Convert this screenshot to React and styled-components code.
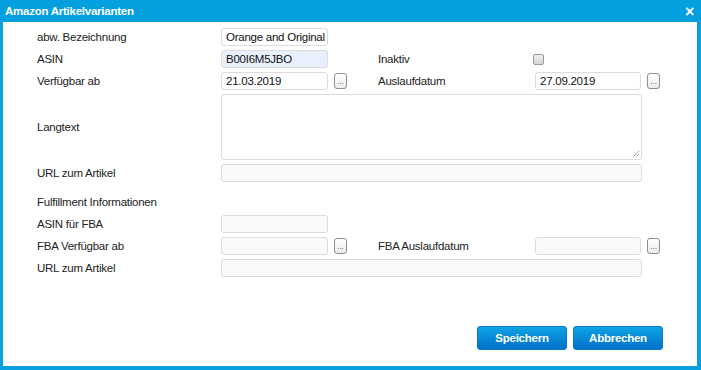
import styled, { createGlobalStyle } from 'styled-components'

const GlobalStyle = createGlobalStyle`
  html, body {
    margin: 0;
    padding: 0;
    background: #fff;
  }
  body {
    font-family: "Liberation Sans", Arial, sans-serif;
    font-size: 11.5px;
    letter-spacing: -0.25px;
  }
`

const Dialog = styled.div`
  width: 701px;
  height: 370px;
  box-sizing: border-box;
  display: flex;
  flex-direction: column;
  background: #fff;
  border-left: 3px solid #0aa0e0;
  border-right: 4px solid #0aa0e0;
  border-bottom: 4px solid #0aa0e0;
`

const TitleBar = styled.div`
  height: 22px;
  margin: 0 -4px 0 -3px;
  padding: 0 7px 0 5px;
  background: #039fdf;
  color: #fff;
  font-weight: bold;
  display: flex;
  align-items: center;
  justify-content: space-between;
`

const Close = styled.span`
  font-size: 16px;
  font-weight: bold;
  line-height: 1;
  margin-top: 2px;
`

const Body = styled.div`
  flex: 1;
  padding: 6px 0 0 34px;
  display: grid;
  grid-template-columns: 184px 157px 157px 125px;
  grid-auto-rows: minmax(18px, auto);
  row-gap: 4px;
  align-content: start;
`

const Label = styled.div`
  color: #222;
  display: flex;
  align-items: center;
  grid-column: ${p => p.$col || 'auto'};
`

const Heading = styled(Label)`
  grid-column: 1 / -1;
  box-sizing: border-box;
  height: 25px;
  padding-top: 7px;
`

const Field = styled.div`
  display: flex;
  align-items: center;
  gap: 6px;
  grid-column: ${p => p.$span ? '2 / 5' : 'auto'};
`

const Input = styled.div`
  box-sizing: border-box;
  height: 18px;
  width: ${p => p.$wide ? '421px' : '107px'};
  border: 1px solid #dcdcdc;
  border-radius: 3px;
  background: ${p => p.$bg || '#fff'};
  color: #111;
  padding: 0 0 0 4px;
  display: flex;
  align-items: center;
  white-space: nowrap;
  overflow: hidden;
`

const TextArea = styled(Input)`
  height: 66px;
  position: relative;
`

const Grip = styled.svg`
  position: absolute;
  right: 1px;
  bottom: 1px;
`

const TextRow = styled(Field)`
  grid-row: span 3;
  align-items: flex-start;
`

const TallLabel = styled(Label)`
  grid-row: span 3;
`

const DotsButton = styled.div`
  box-sizing: border-box;
  width: 13px;
  height: 16px;
  border: 1px solid #8e8e8e;
  border-radius: 3px;
  background: linear-gradient(#fff, #ececec);
  color: #444;
  font-size: 8px;
  letter-spacing: 0;
  line-height: 1;
  display: flex;
  align-items: flex-end;
  justify-content: center;
  padding-bottom: 2px;
`

const Check = styled.div`
  box-sizing: border-box;
  width: 11px;
  height: 11px;
  margin-left: -2px;
  border: 1px solid #9a9a9a;
  border-radius: 2px;
  background: linear-gradient(#f2f2f2, #d4d4d4);
`

const Footer = styled.div`
  display: flex;
  justify-content: flex-end;
  gap: 6px;
  padding: 0 34px 16px 0;
`

const Button = styled.div`
  box-sizing: border-box;
  width: 90px;
  height: 24px;
  border: 1px solid #0b78c8;
  border-radius: 3px;
  background: linear-gradient(#0ea3e3, #0170c9);
  color: #fff;
  font-weight: bold;
  display: flex;
  align-items: center;
  justify-content: center;
`

function DateField({ value }) {
  return (
    <Field>
      <Input $bg={value ? '#fff' : '#fafafa'}>{value}</Input>
      <DotsButton>...</DotsButton>
    </Field>
  )
}

export default function App() {
  return (
    <>
      <GlobalStyle />
      <Dialog>
        <TitleBar>
          <span>Amazon Artikelvarianten</span>
          <Close>×</Close>
        </TitleBar>
        <Body>
          <Label>abw. Bezeichnung</Label>
          <Field><Input>Orange and Original</Input></Field>
          <Label $col="3 / 5" />

          <Label>ASIN</Label>
          <Field><Input $bg="#e8f0fe">B00I6M5JBO</Input></Field>
          <Label>Inaktiv</Label>
          <Field><Check /></Field>

          <Label>Verfügbar ab</Label>
          <DateField value="21.03.2019" />
          <Label>Auslaufdatum</Label>
          <DateField value="27.09.2019" />

          <TallLabel>Langtext</TallLabel>
          <TextRow $span>
            <TextArea $wide>
              <Grip width="9" height="9" viewBox="0 0 9 9">
                <path d="M8 2 L2 8 M8 5 L5 8" stroke="#666" strokeWidth="1" strokeDasharray="1 1" />
              </Grip>
            </TextArea>
          </TextRow>

          <Label>URL zum Artikel</Label>
          <Field $span><Input $wide $bg="#fafafa" /></Field>

          <Heading>Fulfillment Informationen</Heading>

          <Label>ASIN für FBA</Label>
          <Field><Input $bg="#fafafa" /></Field>
          <Label $col="3 / 5" />

          <Label>FBA Verfügbar ab</Label>
          <DateField />
          <Label>FBA Auslaufdatum</Label>
          <DateField />

          <Label>URL zum Artikel</Label>
          <Field $span><Input $wide $bg="#fafafa" /></Field>
        </Body>
        <Footer>
          <Button>Speichern</Button>
          <Button>Abbrechen</Button>
        </Footer>
      </Dialog>
    </>
  )
}
